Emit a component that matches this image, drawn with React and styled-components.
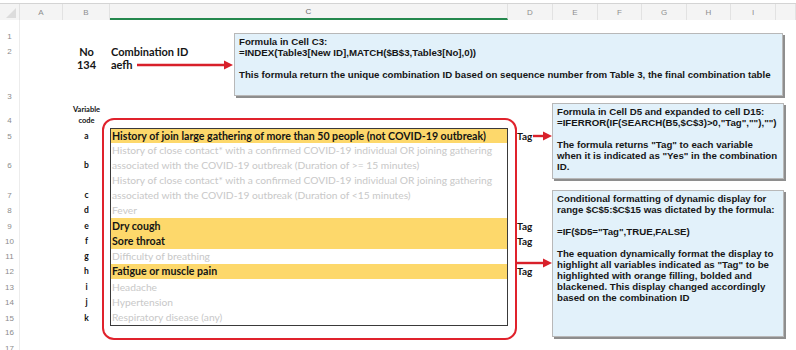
import React from 'react';
import styled, { createGlobalStyle, css } from 'styled-components';

const GlobalStyle = createGlobalStyle`
  html, body { margin: 0; padding: 0; background: #fff; }
  body { font-family: Lato, "Liberation Sans", sans-serif; }
`;

const COLS = '20px 43px 47px 398px 45px 45px 44px 45px 44px 45px 20px';
const LETTERS = ['A', 'B', 'C', 'D', 'E', 'F', 'G', 'H', 'I', ''];

const Sheet = styled.div`
  position: relative;
  width: 796px;
  height: 350px;
  overflow: hidden;
  background: #fff;
`;

const HeaderBar = styled.div`
  margin-top: 3px;
  display: grid;
  grid-template-columns: ${COLS};
  height: 17px;
  box-sizing: border-box;
  background: #f4f4f4;
  border-top: 1px solid #d4d4d4;
`;

const Corner = styled.div`
  position: relative;
  border-right: 1px solid #e2e2e2;
  &::after {
    content: '';
    position: absolute;
    right: 3px;
    bottom: 2px;
    width: 0;
    height: 0;
    border-left: 10px solid transparent;
    border-bottom: 10px solid #dcdcdc;
  }
`;

const ColLetter = styled.div`
  display: flex;
  align-items: center;
  justify-content: center;
  box-sizing: border-box;
  border-right: 1px solid #e2e2e2;
  font: 8px "Liberation Sans", Arial, sans-serif;
  color: #8e8e8e;
  ${(p) =>
    p.$active &&
    css`
      border-bottom: 2px solid #25884e;
      color: #6a6a6a;
    `}
`;

const Body = styled.div`
  display: flex;
  flex-direction: column;
`;

const Row = styled.div`
  display: grid;
  grid-template-columns: ${COLS};
  height: ${(p) => p.$h}px;
`;

const RowNum = styled.div`
  grid-column: 1;
  box-sizing: border-box;
  border-right: 1px solid #ececec;
  display: flex;
  align-items: flex-end;
  justify-content: center;
  padding-bottom: 2px;
  font: 8px/11px "Liberation Sans", Arial, sans-serif;
  color: #8c8c8c;
`;

const CodeCell = styled.div`
  grid-column: 3;
  display: flex;
  flex-direction: column;
  align-items: center;
  justify-content: flex-end;
  padding-bottom: 2px;
  font-weight: 700;
  font-size: ${(p) => (p.$small ? 7.5 : 8.5)}px;
  line-height: 11px;
  color: #111;
  text-align: center;
`;

const HeadValue = styled.div`
  grid-column: ${(p) => p.$col};
  display: flex;
  align-items: ${(p) => (p.$top ? 'flex-start' : 'center')};
  justify-content: ${(p) => (p.$col === 3 ? 'center' : 'flex-start')};
  padding-left: ${(p) => (p.$col === 3 ? 0 : 1)}px;
  font-weight: 700;
  font-size: 11px;
  line-height: 12px;
  color: #151515;
  white-space: nowrap;
`;

const VarCell = styled.div`
  grid-column: 4;
  box-sizing: border-box;
  border-left: 1.5px solid #3a3a3a;
  border-right: 1.5px solid #3a3a3a;
  ${(p) => p.$first && 'border-top: 1.5px solid #3a3a3a;'}
  ${(p) => p.$last && 'border-bottom: 1.5px solid #3a3a3a;'}
  background: ${(p) => (p.$tag ? '#fdd86b' : '#fff')};
  color: ${(p) => (p.$tag ? '#141414' : '#c8c8c8')};
  font-weight: ${(p) => (p.$tag ? 700 : 400)};
  font-size: ${(p) => (p.$tag ? 10.6 : 10.25)}px;
  line-height: 15px;
  padding-left: 1px;
  white-space: nowrap;
  display: flex;
  flex-direction: column;
  justify-content: flex-end;
`;

const TagCell = styled.div`
  grid-column: 5;
  display: flex;
  align-items: flex-end;
  padding-left: 9px;
  font-weight: 700;
  font-size: 10px;
  line-height: 15px;
  color: #151515;
`;

const RedFrame = styled.div`
  position: absolute;
  left: 102px;
  top: 118px;
  width: 415px;
  height: 222px;
  box-sizing: border-box;
  border: 2px solid #e0222c;
  border-radius: 12px;
  pointer-events: none;
`;

const Callout = styled.div`
  position: absolute;
  left: ${(p) => p.$x}px;
  top: ${(p) => p.$y}px;
  width: ${(p) => p.$w}px;
  height: ${(p) => p.$h}px;
  box-sizing: border-box;
  background: #e2f1fa;
  border: 1px solid #b8b8b8;
  box-shadow: 2px 2px 0 #8e8e8e;
  padding: 2px 4px;
  display: flex;
  flex-direction: column;
  gap: 11px;
  font: bold 9.7px/11px "Liberation Sans", Arial, sans-serif;
  color: #161616;
  white-space: nowrap;
  overflow: hidden;
`;

const Para = styled.div``;

const Arrows = styled.svg`
  position: absolute;
  left: 0;
  top: 0;
  pointer-events: none;
`;

const variables = [
  { code: 'a', h: 15, lines: ['History of join large gathering of more than 50 people (not COVID-19 outbreak)'], tag: true },
  {
    code: 'b',
    h: 30,
    lines: [
      'History of close contact* with a confirmed COVID-19 individual OR joining gathering',
      'associated with the COVID-19 outbreak (Duration of >= 15 minutes)',
    ],
  },
  {
    code: 'c',
    h: 30,
    lines: [
      'History of close contact* with a confirmed COVID-19 individual OR joining gathering',
      'associated with the COVID-19 outbreak (Duration of <15 minutes)',
    ],
  },
  { code: 'd', h: 15.25, lines: ['Fever'] },
  { code: 'e', h: 15.25, lines: ['Dry cough'], tag: true },
  { code: 'f', h: 15.25, lines: ['Sore throat'], tag: true },
  { code: 'g', h: 15.25, lines: ['Difficulty of breathing'] },
  { code: 'h', h: 15.25, lines: ['Fatigue or muscle pain'], tag: true },
  { code: 'i', h: 15.25, lines: ['Headache'] },
  { code: 'j', h: 15.25, lines: ['Hypertension'] },
  { code: 'k', h: 15.25, lines: ['Respiratory disease (any)'] },
];

function Arrow({ x1, x2, y }) {
  return (
    <g>
      <line x1={x1} y1={y} x2={x2 - 7} y2={y} stroke="#d8202a" strokeWidth="2.4" />
      <polygon points={`${x2 - 9},${y - 4.5} ${x2},${y} ${x2 - 9},${y + 4.5}`} fill="#d8202a" />
    </g>
  );
}

export default function App() {
  return (
    <Sheet>
      <GlobalStyle />
      <HeaderBar>
        <Corner />
        {LETTERS.map((l, i) => (
          <ColLetter key={i} $active={l === 'C'}>
            {l}
          </ColLetter>
        ))}
      </HeaderBar>
      <Body>
        <Row $h={24}>
          <RowNum>1</RowNum>
        </Row>
        <Row $h={15}>
          <RowNum>2</RowNum>
          <HeadValue $col={3}>No</HeadValue>
          <HeadValue $col={4}>Combination ID</HeadValue>
        </Row>
        <Row $h={45}>
          <RowNum>3</RowNum>
          <HeadValue $col={3} $top>
            134
          </HeadValue>
          <HeadValue $col={4} $top>
            aefh
          </HeadValue>
        </Row>
        <Row $h={24}>
          <RowNum>4</RowNum>
          <CodeCell $small>
            <span>Variable</span>
            <span>code</span>
          </CodeCell>
        </Row>
        {variables.map((v, i) => (
          <Row key={v.code} $h={v.h}>
            <RowNum>{i + 5}</RowNum>
            <CodeCell>{v.code}</CodeCell>
            <VarCell $tag={v.tag} $first={i === 0} $last={i === variables.length - 1}>
              {v.lines.map((t, j) => (
                <span key={j}>{t}</span>
              ))}
            </VarCell>
            <TagCell>{v.tag ? 'Tag' : ''}</TagCell>
          </Row>
        ))}
        <Row $h={15.25}>
          <RowNum>16</RowNum>
        </Row>
        <Row $h={15.25}>
          <RowNum>17</RowNum>
        </Row>
      </Body>

      <RedFrame />

      <Callout $x={234} $y={33} $w={549} $h={63}>
        <Para>
          Formula in Cell C3:
          <br />
          =INDEX(Table3[New ID],MATCH($B$3,Table3[No],0))
        </Para>
        <Para>
          This formula return the unique combination ID based on sequence number from Table 3, the final combination table
        </Para>
      </Callout>

      <Callout $x={552} $y={103} $w={232} $h={76}>
        <Para>
          Formula in Cell D5 and expanded to cell D15:
          <br />
          =IFERROR(IF(SEARCH(B5,$C$3)&gt;0,"Tag",""),"")
        </Para>
        <Para>
          The formula returns "Tag" to each variable
          <br />
          when it is indicated as "Yes" in the combination
          <br />
          ID.
        </Para>
      </Callout>

      <Callout $x={552} $y={190} $w={232} $h={147}>
        <Para>
          Conditional formatting of dynamic display for
          <br />
          range $C$5:$C$15 was dictated by the formula:
        </Para>
        <Para>=IF($D5="Tag",TRUE,FALSE)</Para>
        <Para>
          The equation dynamically format the display to
          <br />
          highlight all variables indicated as "Tag" to be
          <br />
          highlighted with orange filling, bolded and
          <br />
          blackened. This display changed accordingly
          <br />
          based on the combination ID
        </Para>
      </Callout>

      <Arrows width="796" height="350" viewBox="0 0 796 350">
        <Arrow x1={137} x2={233} y={65} />
        <Arrow x1={533} x2={552} y={136} />
        <Arrow x1={516} x2={552} y={263} />
      </Arrows>
    </Sheet>
  );
}
